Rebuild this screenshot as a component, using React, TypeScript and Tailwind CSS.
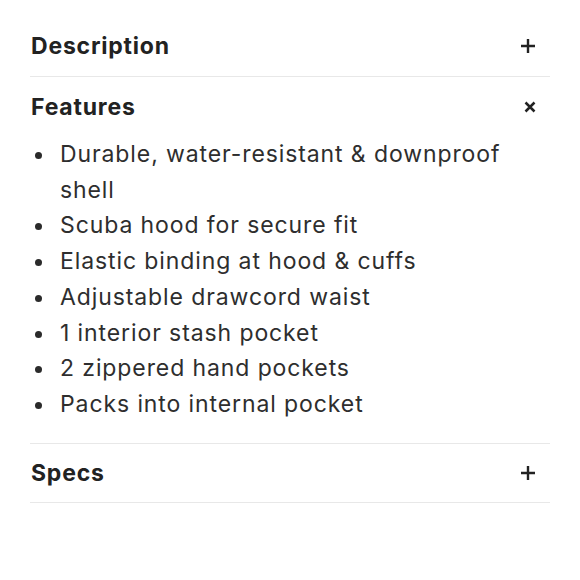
import React from 'react';

const features = [
  'Durable, water-resistant & downproof shell',
  'Scuba hood for secure fit',
  'Elastic binding at hood & cuffs',
  'Adjustable drawcord waist',
  '1 interior stash pocket',
  '2 zippered hand pockets',
  'Packs into internal pocket',
];

function PlusIcon() {
  return (
    <svg width="16" height="16" viewBox="0 0 16 16" className="text-[#222]">
      <path d="M8 1v14M1 8h14" stroke="currentColor" strokeWidth="2.4" />
    </svg>
  );
}

function CloseIcon() {
  return (
    <svg width="12" height="12" viewBox="0 0 12 12" className="text-[#222]">
      <path d="M1.5 1.5l9 9M10.5 1.5l-9 9" stroke="currentColor" strokeWidth="2.5" />
    </svg>
  );
}

function Header({ title, open, short }: { title: string; open?: boolean; short?: boolean }) {
  return (
    <button
      className={`w-full ${short ? 'h-[58px]' : 'h-[60px]'} flex items-center justify-between pl-[1px] pr-[14px] cursor-pointer`}
    >
      <span className="text-[23px] font-bold text-[#222] tracking-[0.8px] pt-[1px]" style={{ fontFamily: 'Inter, sans-serif' }}>
        {title}
      </span>
      {open ? <CloseIcon /> : <PlusIcon />}
    </button>
  );
}

export default function App() {
  return (
    <div className="w-[580px] h-[580px] bg-white pt-[16px] px-[30px]">
      <div className="border-b border-[#e8e8e8]">
        <Header title="Description" />
      </div>

      <div className="border-b border-[#e8e8e8]">
        <Header title="Features" open />
        <ul className="pb-[20px] text-[23px] leading-[35.7px] tracking-[0.9px] text-[#2e2e2e]" style={{ fontFamily: 'Inter, sans-serif' }}>
          {features.map((f) => (
            <li key={f} className="flex">
              <span className="w-[30px] shrink-0 flex pt-[15px] pl-[5px]">
                <span className="block w-[7px] h-[7px] rounded-full bg-[#2b2b2b]" />
              </span>
              <span>{f}</span>
            </li>
          ))}
        </ul>
      </div>

      <div className="border-b border-[#e8e8e8]">
        <Header title="Specs" short />
      </div>
    </div>
  );
}
